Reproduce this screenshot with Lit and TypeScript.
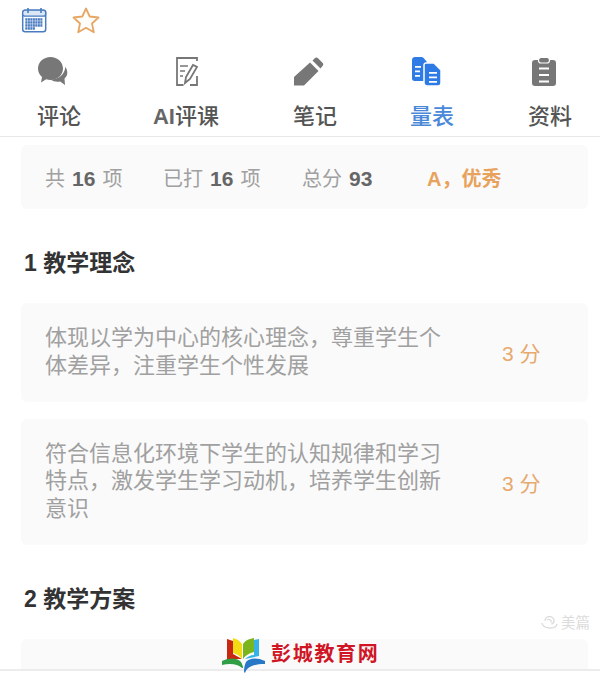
import { LitElement, html, css, svg } from "lit";
import { customElement } from "lit/decorators.js";

const tabs = [
  {
    label: html`评论`,
    icon: svg`<path d="M12.500 0C19.400 0 25 5 25 11.500S19.400 23 12.500 23c-1.500 0-3-.2-4.300-.7L3 25.500l1-5.500C1.500 18 0 15 0 11.500 0 5 5.600 0 12.500 0z"/><path d="M27 9.500c1.500 1.800 2.300 4 2.300 6 0 2.500-1 4.500-2.800 6l.5 6.500-4.800-3.500c-.8.2-1.800.3-2.700.3-2.500 0-5-1-6.700-2.300 7 .3 14.500-5 14.500-13z"/>`,
  },
  {
    label: html`<b>AI</b>评课`,
    wide: true,
    icon: svg`<g transform="translate(1 0)" fill="none" stroke="currentColor" stroke-width="1.800"><path d="M25 4V1H5v27h6.500M18 28h7v-9"/><path d="M8 9h8M8 14h5M8 19h3" stroke-width="1.600"/><path d="M13 26l1-6 7-12 4 2-7 12z"/></g>`,
  },
  {
    label: html`笔记`,
    icon: svg`<path d="M0 20L16 5.500l8.500 8.500L10 28.500H0z"/><path d="M18.500 3.500l2.300-2.300c1-1 2.200-1 3.200 0l4.500 4.500c1 1 1 2.200 0 3.200l-2 2.600z"/>`,
  },
  {
    label: html`量表`,
    active: true,
    icon: svg`<path d="M4 0h6c1 0 2 .5 2.800 1.300L16 5v19H3.500C2 24 1 23 1 21.500V3c0-1.700 1.300-3 3-3z"/>
      <path d="M4 9h6v1.800H4zM4 13.500h5v1.800H4zM4 18h5v1.800H4z" fill="#fff"/>
      <path d="M15 6h8l7 7v13c0 1.700-1.300 3-3 3H16c-1.700 0-3-1.300-3-3V8c0-1.100.9-2 2-2z" stroke="#fff" stroke-width="1.500"/>
      <path d="M18 15h8v1.800h-8zM18 19.500h8v1.800h-8zM18 24h8v1.800h-8z" fill="#fff"/>`,
  },
  {
    label: html`资料`,
    icon: svg`<rect x="3" y="3" width="24" height="26" rx="3"/>
      <rect x="9.500" y="0.500" width="11" height="5.500" rx="2.500" stroke="#fff" stroke-width="1.200"/>
      <path d="M10 10.500h10v2H10zM10 17h10v2H10zM10 23.500h10v2H10z" fill="#fff"/>`,
  },
];

const calendarCells = [0, 1, 2, 3].flatMap((row) =>
  [0, 1, 2, 3, 4, 5, 6]
    .filter((col) => row < 3 || col < 4)
    .map(
      (col) => svg`<rect x=${4.3 + col * 2.5} y=${11.2 + row * 3} width="2.100" height="2.500"/>`
    )
);

@customElement("app-root")
export class AppRoot extends LitElement {
  static styles = css`
    :host {
      display: block;
      position: relative;
      height: 673px;
      overflow: hidden;
      background: #fff;
      font-family: "Liberation Sans", "Noto Sans CJK SC", sans-serif;
    }

    .top {
      display: flex;
      align-items: center;
      gap: 25px;
      height: 40px;
      padding-left: 21px;
    }

    .tabs {
      display: grid;
      grid-template-columns: 118px 136px 122px 112px 112px;
      height: 97px;
      border-bottom: 1px solid #e8e8e8;
      box-sizing: border-box;
    }

    .tab {
      display: flex;
      flex-direction: column;
      align-items: center;
      padding-top: 17px;
      color: #555;
      font-size: 22px;
      font-weight: 500;
    }

    .tab:last-child {
      padding-left: 12px;
    }

    .tab.active {
      color: #4a88d8;
    }

    .tab b {
      color: #666;
    }

    .tab svg {
      height: 30px;
      width: 30px;
      margin-right: 12px;
      fill: currentColor;
      color: #777;
    }

    .tab.wide svg {
      margin-right: 0;
    }

    .tab.active svg {
      color: #2f7be5;
    }

    .tab span {
      margin-top: 15px;
      line-height: 30px;
    }

    .content {
      padding: 8px 12px 0 21px;
    }

    .stats {
      display: flex;
      align-items: center;
      height: 64px;
      padding-left: 24px;
      background: #fafafa;
      border-radius: 6px;
      color: #a0a0a0;
      font-size: 20px;
      word-spacing: 1.500px;
    }

    .stats b {
      color: #666;
      font-size: 21px;
    }

    .stats .s1 {
      width: 118px;
    }

    .stats .s2 {
      width: 139px;
    }

    .stats .s3 {
      width: 125px;
    }

    .stats .grade {
      color: #e8a25c;
      font-weight: 700;
    }

    h2 {
      margin: 39px 0 25px;
      color: #333;
      font-size: 23px;
      font-weight: 700;
      line-height: 30px;
      padding-left: 3px;
    }

    .item {
      display: flex;
      align-items: center;
      box-sizing: border-box;
      padding-left: 24px;
      background: #fafafa;
      border-radius: 6px;
      margin-bottom: 17px;
      color: #a0a0a0;
      font-size: 22px;
      line-height: 27.500px;
    }

    .item.short {
      height: 99px;
    }

    .item.tall {
      height: 126px;
    }

    .item.cut {
      height: 30px;
      margin-bottom: 0;
      border-radius: 6px 6px 0 0;
    }

    .item p {
      margin: 0;
      width: 400px;
      padding-bottom: 2px;
    }

    .item .score {
      margin-left: 57px;
      padding-top: 3px;
      color: #e6a96e;
      font-size: 21px;
      white-space: nowrap;
    }

    .footline {
      height: 2px;
      background: #ececec;
    }

    .logo {
      position: absolute;
      left: 222px;
      top: 637px;
      display: flex;
      align-items: center;
      gap: 6px;
    }

    .logo span {
      color: #d01525;
      font-size: 20px;
      font-weight: 700;
      letter-spacing: 1.700px;
      margin-top: -6px;
    }

    .mark {
      position: absolute;
      left: 541px;
      top: 611px;
      display: flex;
      align-items: center;
      gap: 3px;
      color: #dcdcdc;
      font-size: 14.500px;
    }
  `;

  render() {
    return html`
      <div class="top">
        <svg width="26" height="26" viewBox="0 0 26 26">
          <rect x="1.700" y="3.200" width="23" height="21.600" rx="2.500" fill="#fff" stroke="#4a7cc0" stroke-width="1.500"/>
          <rect x="1.700" y="3.200" width="23" height="6" rx="2.500" fill="#dbe7f6" stroke="#4a7cc0" stroke-width="1.300"/>
          <path d="M7 1v5M20 1v5" stroke="#4a7cc0" stroke-width="1.600"/>
          <g fill="#4a7cc0">${calendarCells}</g>
        </svg>
        <svg width="28" height="27" viewBox="0 0 28 27">
          <path d="M14 1.500l3.700 8 8.800 1-6.500 6 1.800 8.800-7.800-4.500-7.800 4.500 1.800-8.800-6.500-6 8.800-1z" fill="#fffdf9" stroke="#e6a765" stroke-width="1.800" stroke-linejoin="round"/>
        </svg>
      </div>

      <div class="tabs">
        ${tabs.map(
          (t) => html`
            <div class="tab ${t.active ? "active" : ""} ${t.wide ? "wide" : ""}">
              <svg viewBox="0 0 30 30">${t.icon}</svg>
              <span>${t.label}</span>
            </div>
          `
        )}
      </div>

      <div class="content">
        <div class="stats">
          <div class="s1">共 <b>16</b> 项</div>
          <div class="s2">已打 <b>16</b> 项</div>
          <div class="s3">总分 <b>93</b></div>
          <div class="grade">A，优秀</div>
        </div>

        <h2>1 教学理念</h2>

        <div class="item short">
          <p>体现以学为中心的核心理念，尊重学生个体差异，注重学生个性发展</p>
          <div class="score">3 分</div>
        </div>

        <div class="item tall">
          <p>符合信息化环境下学生的认知规律和学习特点，激发学生学习动机，培养学生创新意识</p>
          <div class="score">3 分</div>
        </div>

        <h2>2 教学方案</h2>

        <div class="item cut"></div>
      </div>
      <div class="footline"></div>

      <div class="mark">
        <svg width="17" height="17" viewBox="0 0 17 17" fill="none" stroke="#dcdcdc" stroke-width="1.400">
          <path d="M4 8a4.500 4.500 0 0 1 9 0c0 1.500-1 2.500-2.500 3M6 7c2-1.500 5 0 4 2.500M1 10c1 6 14 7 15 1"/>
        </svg>
        <span>美篇</span>
      </div>

      <div class="logo">
        <svg width="43" height="36" viewBox="0 0 43 36">
          <path d="M5 2l6 2v13l9 5H5z" fill="#c8280f"/>
          <path d="M11 1c4 1 7 3 9 6v15c-2-3-5-5-9-6z" fill="#f4dc14"/>
          <path d="M21 7c2-3 5-5 11-6v14c-5 1-8 3-11 7z" fill="#7ab51d"/>
          <path d="M32 3l5-1v17l-14 3c2-2 6-4 9-4z" fill="#35b2e8"/>
          <path d="M0 24c8-4 16-3 19 1 1 2 2 4 2 6h-1C16 27 8 26 0 28z" fill="#2f9e44"/>
          <path d="M43 24c-8-4-16-3-19 1-1 2-2 5-2 10l1 1c2-6 8-9 20-9z" fill="#2878c8"/>
        </svg>
        <span>彭城教育网</span>
      </div>
    `;
  }
}
